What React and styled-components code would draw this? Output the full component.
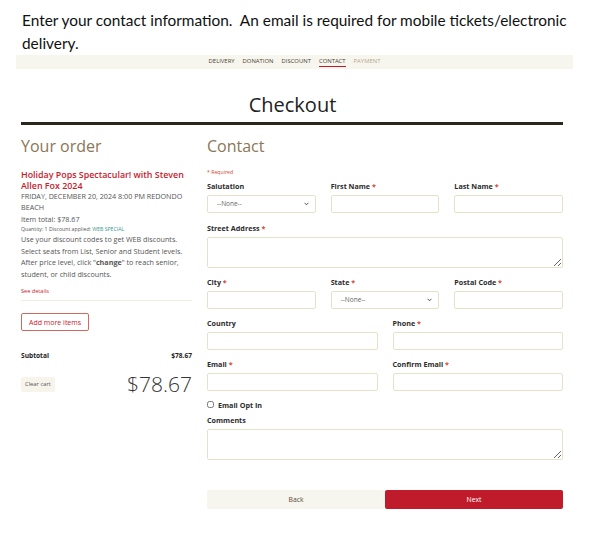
import React from 'react';
import styled, { createGlobalStyle } from 'styled-components';

const GlobalStyle = createGlobalStyle`
  body {
    margin: 0;
    background: #fff;
    font-family: 'Open Sans', 'Liberation Sans', sans-serif;
    color: #333;
  }
`;

const Page = styled.div`
  width: 593px;
  padding: 9px 0 0 0;
`;

const Intro = styled.p`
  margin: 0 0 0 22px;
  font-family: Lato, 'Open Sans', sans-serif;
  font-size: 15.4px;
  line-height: 23px;
  color: #111;
  width: 565px;
`;

const Steps = styled.nav`
  margin: 0 20px 0 16px;
  height: 14px;
  background: #f7f6ee;
  display: flex;
  justify-content: center;
  align-items: center;
  gap: 8px;
`;

const Step = styled.span`
  font-size: 5.9px;
  text-transform: uppercase;
  color: ${(p) => (p.muted ? '#b7a88d' : '#4a4030')};
  padding-bottom: 1px;
  border-bottom: 1.5px solid ${(p) => (p.active ? '#c01b2a' : 'transparent')};
  line-height: 8px;
`;

const Title = styled.h1`
  margin: 22px 0 0 0;
  text-align: center;
  font-weight: 400;
  font-size: 20px;
  line-height: 28px;
  color: #222;
  width: 585px;
`;

const Wrap = styled.div`
  margin: 0 0 0 21px;
  width: 542px;
`;

const Rule = styled.hr`
  margin: 3px 0 0 0;
  border: none;
  height: 2.5px;
  background: #2a281c;
`;

const Columns = styled.div`
  display: grid;
  grid-template-columns: 171px 356px;
  column-gap: 15px;
  margin-top: 9px;
`;

const Heading = styled.h2`
  margin: 0;
  font-weight: 400;
  font-size: 16px;
  line-height: 24px;
  color: #8c7656;
`;

const Order = styled.div``;

const EventName = styled.div`
  margin-top: 11px;
  color: #c8202d;
  font-weight: 600;
  font-size: 8.9px;
  line-height: 11px;
`;

const Small = styled.div`
  font-size: 7.2px;
  line-height: 11.5px;
  color: #555;
`;

const Tiny = styled.div`
  font-size: 5.2px;
  line-height: 9px;
  color: #555;
  span {
    color: #3a9a8a;
  }
`;

const Detail = styled.a`
  display: block;
  margin-top: 7px;
  font-size: 5.6px;
  color: #c8202d;
  padding-bottom: 5px;
  border-bottom: 1px solid #efede2;
`;

const OutlineButton = styled.button`
  margin-top: 12px;
  font-family: inherit;
  font-size: 7px;
  color: #c8202d;
  background: #fff;
  border: 1px solid #d2685e;
  border-radius: 2px;
  padding: 0 7px;
  height: 18px;
`;

const TotalRow = styled.div`
  display: flex;
  justify-content: space-between;
  align-items: center;
  margin-top: ${(p) => p.top}px;
  font-weight: 700;
  font-size: 6.6px;
  color: #222;
`;

const SoftButton = styled.button`
  font-family: inherit;
  font-size: 5.8px;
  color: #555;
  background: #f6f4eb;
  border: none;
  border-radius: 2px;
  height: 15px;
  padding: 0 4px;
`;

const BigTotal = styled.span`
  font-weight: 300;
  font-size: 21px;
  color: #333;
  line-height: 28px;
`;

const Form = styled.form``;

const Required = styled.div`
  margin-top: 10px;
  font-size: 5.2px;
  color: #d0472f;
  line-height: 8px;
`;

const Grid = styled.div`
  display: grid;
  grid-template-columns: repeat(${(p) => p.cols}, 1fr);
  column-gap: 15px;
  margin-top: ${(p) => p.top}px;
`;

const Field = styled.div`
  display: flex;
  flex-direction: column;
  gap: 5px;
`;

const Label = styled.label`
  font-size: 7.2px;
  font-weight: 700;
  color: #2b2b2b;
  line-height: 8px;
  span {
    color: #d0472f;
  }
`;

const Input = styled.input`
  display: block;
  box-sizing: border-box;
  height: 18px;
  width: 100%;
  margin: 0;
  border: 1px solid #e8e1c9;
  border-radius: 2px;
  background: #fff;
`;

const SelectBox = styled.div`
  position: relative;
  height: 18px;
  svg {
    position: absolute;
    right: 7px;
    top: 7px;
    pointer-events: none;
  }
`;

const Select = styled.select`
  display: block;
  box-sizing: border-box;
  appearance: none;
  height: 18px;
  width: 100%;
  margin: 0;
  border: 1px solid #e8e1c9;
  border-radius: 2px;
  background: #fff;
  font-family: inherit;
  font-size: 6.5px;
  color: #666;
  padding-left: 9px;
`;

const Area = styled.textarea`
  display: block;
  box-sizing: border-box;
  height: 31px;
  width: 100%;
  margin: 0;
  border: 1px solid #e8e1c9;
  border-radius: 2px;
  resize: vertical;
`;

const Check = styled.label`
  display: flex;
  align-items: center;
  gap: 4px;
  margin-top: 10px;
  font-size: 7.2px;
  font-weight: 700;
  line-height: 8px;
  color: #2b2b2b;
  input {
    margin: 0;
    width: 7px;
    height: 7px;
  }
`;

const Actions = styled.div`
  display: grid;
  grid-template-columns: 1fr 1fr;
  margin-top: 30px;
`;

const NavButton = styled.button`
  height: 19px;
  border: none;
  border-radius: 2px;
  font-family: inherit;
  font-size: 6.8px;
  background: ${(p) => (p.primary ? '#c01b2a' : '#f7f6ee')};
  color: ${(p) => (p.primary ? '#fff' : '#5a4a3a')};
`;

const Req = () => <span> *</span>;

const Dropdown = () => (
  <SelectBox>
    <Select>
      <option>--None--</option>
    </Select>
    <svg width="5" height="4" viewBox="0 0 5 4">
      <path d="M0.6 0.8 L2.5 2.8 L4.4 0.8" fill="none" stroke="#444" strokeWidth="0.9" />
    </svg>
  </SelectBox>
);

export default function App() {
  return (
    <Page>
      <GlobalStyle />
      <Intro>
        Enter your contact information.&nbsp; An email is required for mobile tickets/electronic delivery.
      </Intro>
      <Steps>
        <Step>Delivery</Step>
        <Step>Donation</Step>
        <Step>Discount</Step>
        <Step active>Contact</Step>
        <Step muted>Payment</Step>
      </Steps>
      <Title>Checkout</Title>
      <Wrap>
        <Rule />
        <Columns>
          <Order>
            <Heading>Your order</Heading>
            <EventName>Holiday Pops Spectacular! with Steven Allen Fox 2024</EventName>
            <Small>FRIDAY, DECEMBER 20, 2024 8:00 PM REDONDO BEACH</Small>
            <Small>Item total: $78.67</Small>
            <Tiny>
              Quantity: 1 Discount applied: <span>WEB SPECIAL</span>
            </Tiny>
            <Small>
              Use your discount codes to get WEB discounts. Select seats from List, Senior and Student levels.
              After price level, click "<b>change</b>" to reach senior, student, or child discounts.
            </Small>
            <Detail>See details</Detail>
            <OutlineButton type="button">Add more items</OutlineButton>
            <TotalRow top={20}>
              <span>Subtotal</span>
              <span>$78.67</span>
            </TotalRow>
            <TotalRow top={10}>
              <SoftButton type="button">Clear cart</SoftButton>
              <BigTotal>$78.67</BigTotal>
            </TotalRow>
          </Order>
          <Form>
            <Heading>Contact</Heading>
            <Required>* Required</Required>
            <Grid cols={3} top={6}>
              <Field>
                <Label>Salutation</Label>
                <Dropdown />
              </Field>
              <Field>
                <Label>
                  First Name<Req />
                </Label>
                <Input />
              </Field>
              <Field>
                <Label>
                  Last Name<Req />
                </Label>
                <Input />
              </Field>
            </Grid>
            <Grid cols={1} top={11}>
              <Field>
                <Label>
                  Street Address<Req />
                </Label>
                <Area />
              </Field>
            </Grid>
            <Grid cols={3} top={10}>
              <Field>
                <Label>
                  City<Req />
                </Label>
                <Input />
              </Field>
              <Field>
                <Label>
                  State<Req />
                </Label>
                <Dropdown />
              </Field>
              <Field>
                <Label>
                  Postal Code<Req />
                </Label>
                <Input />
              </Field>
            </Grid>
            <Grid cols={2} top={10}>
              <Field>
                <Label>Country</Label>
                <Input />
              </Field>
              <Field>
                <Label>
                  Phone<Req />
                </Label>
                <Input />
              </Field>
            </Grid>
            <Grid cols={2} top={10}>
              <Field>
                <Label>
                  Email<Req />
                </Label>
                <Input />
              </Field>
              <Field>
                <Label>
                  Confirm Email<Req />
                </Label>
                <Input />
              </Field>
            </Grid>
            <Check>
              <input type="checkbox" />
              Email Opt In
            </Check>
            <Grid cols={1} top={7}>
              <Field>
                <Label>Comments</Label>
                <Area />
              </Field>
            </Grid>
            <Actions>
              <NavButton type="button">Back</NavButton>
              <NavButton type="button" primary>
                Next
              </NavButton>
            </Actions>
          </Form>
        </Columns>
      </Wrap>
    </Page>
  );
}
